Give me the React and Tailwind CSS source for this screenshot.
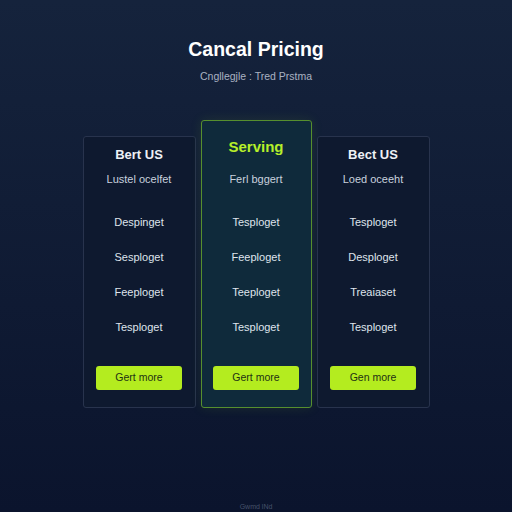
import React from "react";

const plans = [
  {
    name: "Bert US",
    note: "Lustel ocelfet",
    features: ["Despinget", "Sesploget", "Feeploget", "Tesploget"],
    cta: "Gert more",
  },
  {
    name: "Serving",
    note: "Ferl bggert",
    features: ["Tesploget", "Feeploget", "Teeploget", "Tesploget"],
    cta: "Gert more",
    featured: true,
  },
  {
    name: "Bect US",
    note: "Loed oceeht",
    features: ["Tesploget", "Desploget", "Treaiaset", "Tesploget"],
    cta: "Gen more",
  },
];

function PlanCard({ plan }) {
  const featured = plan.featured;
  return (
    <div
      className={
        featured
          ? "flex w-[111px] flex-col items-center rounded-[3px] border border-[#568f2e] bg-[#0f2a3b] pt-[14px] pb-[17px] shadow-[0_0_12px_rgba(120,200,40,0.12)]"
          : "flex w-[113px] flex-col items-center rounded-[3px] border border-[#28334d] bg-[#0e192f] pt-[8px] pb-[17px]"
      }
    >
      <h3
        className={
          featured
            ? "m-0 text-[15px] leading-[24px] font-semibold text-[#b6ef2a]"
            : "m-0 text-[13px] leading-[20px] font-bold text-[#eef1f6]"
        }
      >
        {plan.name}
      </h3>
      <p className={"m-0 text-[11px] leading-[16px] text-[#c9d1de] " + (featured ? "mt-[12px]" : "mt-[6px]")}>
        {plan.note}
      </p>
      <ul className="m-0 mt-[27px] flex list-none flex-col items-center gap-[19px] p-0">
        {plan.features.map((f, i) => (
          <li key={i} className="text-[11px] leading-[16px] text-[#dfe4ec]">
            {f}
          </li>
        ))}
      </ul>
      <button
        type="button"
        className="mt-[31px] h-[24px] w-[86px] rounded-[3px] bg-[#b4ec1f] text-[10.5px] text-[#223014]"
      >
        {plan.cta}
      </button>
    </div>
  );
}

export default function App() {
  return (
    <div
      className="flex h-[512px] w-[512px] flex-col items-center bg-gradient-to-b from-[#15233c] to-[#0b142d]"
      style={{ fontFamily: '"Liberation Sans", Arial, sans-serif' }}
    >
      <h1 className="m-0 mt-[37px] text-[19.5px] leading-[24px] font-semibold text-white">Cancal Pricing</h1>
      <p className="m-0 mt-[9px] text-[10.5px] leading-[12px] text-[#a9b2c2]">Cngllegjle : Tred Prstma</p>
      <div className="mt-[38px] flex items-end gap-[5px]">
        {plans.map((p, i) => (
          <PlanCard key={i} plan={p} />
        ))}
      </div>
      <p className="m-0 mt-auto mb-[1px] text-[7px] leading-[9px] text-[#46526a]">Gwmd lNd</p>
    </div>
  );
}
